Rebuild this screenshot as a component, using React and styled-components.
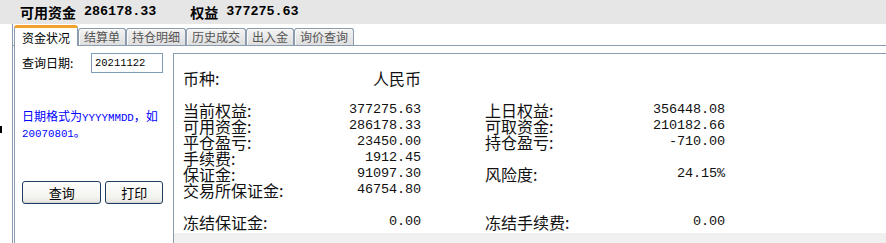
import React from "react";
import styled, { createGlobalStyle } from "styled-components";

const CJK = `"Noto Sans CJK SC", "Noto Sans", sans-serif`;
const MONO = `"Liberation Mono", "Noto Sans CJK SC", monospace`;
const LINE = "#8a9cad";

const Global = createGlobalStyle`
  html, body { margin: 0; padding: 0; background: #fff; }
  body { font-family: ${CJK}; color: #000; }
  * { box-sizing: border-box; }
`;

const Page = styled.div`
  width: 886px;
  height: 243px;
  overflow: hidden;
  display: flex;
  flex-direction: column;
  background: #fff;
`;

const TopBar = styled.div`
  height: 24px;
  flex: none;
  background: #e6e6e6;
  display: flex;
  align-items: center;
  padding-left: 20px;
`;

const Stat = styled.div`
  display: flex;
  align-items: center;
  gap: 8px;
  margin-right: 34px;
`;

const StatLabel = styled.span`
  font-family: ${CJK};
  font-size: 14px;
  font-weight: 700;
  line-height: 16px;
`;

const StatValue = styled.span`
  font-family: ${MONO};
  font-size: 13.4px;
  font-weight: 700;
  line-height: 16px;
`;

const Body = styled.div`
  flex: 1;
  display: flex;
  min-height: 0;
`;

const Gutter = styled.div`
  width: 12px;
  flex: none;
  padding-top: 102px;
`;

const CursorMark = styled.div`
  width: 2px;
  height: 7px;
  background: #000;
`;

const Main = styled.div`
  flex: 1;
  display: flex;
  flex-direction: column;
  border-left: 1px solid ${LINE};
  min-width: 0;
`;

const TabStrip = styled.div`
  height: 22px;
  flex: none;
  display: flex;
  align-items: flex-end;
  padding-left: 1px;
  border-bottom: 1px solid ${LINE};
`;

const Tab = styled.div`
  position: relative;
  font-family: ${CJK};
  font-size: 12px;
  line-height: 14px;
  white-space: nowrap;
  display: flex;
  align-items: center;
  border: 1px solid ${LINE};
  border-bottom: none;
  border-radius: 3px 3px 0 0;
  ${(p) =>
    p.$active
      ? `
    height: 21px;
    margin-bottom: -1px;
    padding: 1px 7px 0 7px;
    background: #fff;
    color: #000;
    border-top: 3px solid #f2a22a;
    z-index: 1;
  `
      : `
    height: 17px;
    padding: 0 5px;
    background: linear-gradient(#f3f3f3, #dedede);
    color: #555;
    box-shadow: inset 1px 1px 0 #fafafa;
  `}
`;

const Content = styled.div`
  flex: 1;
  display: flex;
  margin-left: 1px;
  border-left: 1px solid ${LINE};
  min-height: 0;
`;

const LeftPanel = styled.div`
  width: 158px;
  flex: none;
  padding: 7px 10px 0 7px;
`;

const DateRow = styled.div`
  display: flex;
  align-items: center;
  justify-content: space-between;
  height: 20px;
`;

const FieldLabel = styled.span`
  font-family: ${CJK};
  font-size: 12px;
  line-height: 14px;
`;

const DateInput = styled.input`
  width: 72px;
  height: 20px;
  border: 1px solid #7f9db9;
  padding: 0 0 0 3px;
  font-family: ${MONO};
  font-size: 10.5px;
  color: #000;
  outline: none;
  background: #fff;
`;

const Hint = styled.div`
  margin-top: 36px;
  color: #0000ff;
  font-family: ${CJK};
  font-size: 12px;
  line-height: 13px;
`;

const HintMono = styled.span`
  font-family: ${MONO};
  font-size: 10.8px;
`;

const ButtonRow = styled.div`
  margin-top: 40px;
  display: flex;
  gap: 4px;
`;

const Button = styled.button`
  width: ${(p) => p.$w}px;
  height: 23px;
  padding: 0;
  border: 1px solid #1e3d63;
  border-radius: 3px;
  background: linear-gradient(#fefefe, #f4f4f0 70%, #e4e3dd);
  font-family: ${CJK};
  font-size: 13px;
  color: #000;
  box-shadow: inset 0 -1px 0 #d6d5cf;
`;

const RightPanel = styled.div`
  flex: 1;
  margin-top: 7px;
  border-top: 1px solid ${LINE};
  border-left: 1px solid ${LINE};
  display: flex;
  flex-direction: column;
  min-width: 0;
`;

const Sheet = styled.div`
  flex: 1;
  padding: 16px 0 0 9px;
`;

const Row = styled.div`
  height: 16px;
  display: flex;
  line-height: 16px;
`;

const Pair = styled.div`
  width: ${(p) => p.$w}px;
  margin-left: ${(p) => p.$offset || 0}px;
  display: flex;
  justify-content: space-between;
`;

const Label = styled.span`
  font-family: ${CJK};
  font-size: 16px;
  color: #111;
`;

const Value = styled.span`
  font-family: ${(p) => (p.$cjk ? CJK : MONO)};
  font-size: ${(p) => (p.$cjk ? 16 : 13.5)}px;
  letter-spacing: ${(p) => (p.$cjk ? 0 : -0.1)}px;
  color: #111;
`;

const Scroll = styled.div`
  height: 10px;
  flex: none;
  background: #f0f0f0;
  padding: 3px 0 0 6px;
`;

const rows = [
  [["币种:", "人民币", true], null],
  null,
  [["当前权益:", "377275.63"], ["上日权益:", "356448.08"]],
  [["可用资金:", "286178.33"], ["可取资金:", "210182.66"]],
  [["平仓盈亏:", "23450.00"], ["持仓盈亏:", "-710.00"]],
  [["手续费:", "1912.45"], null],
  [["保证金:", "91097.30"], ["风险度:", "24.15%"]],
  [["交易所保证金:", "46754.80"], null],
  null,
  [["冻结保证金:", "0.00"], ["冻结手续费:", "0.00"]],
];

const tabs = ["资金状况", "结算单", "持仓明细", "历史成交", "出入金", "询价查询"];

export default function App() {
  return (
    <>
      <Global />
      <Page>
        <TopBar>
          <Stat>
            <StatLabel>可用资金</StatLabel>
            <StatValue>286178.33</StatValue>
          </Stat>
          <Stat>
            <StatLabel>权益</StatLabel>
            <StatValue>377275.63</StatValue>
          </Stat>
        </TopBar>
        <Body>
          <Gutter>
            <CursorMark />
          </Gutter>
          <Main>
            <TabStrip>
              {tabs.map((t, i) => (
                <Tab key={t} $active={i === 0}>
                  {t}
                </Tab>
              ))}
            </TabStrip>
            <Content>
              <LeftPanel>
                <DateRow>
                  <FieldLabel>查询日期:</FieldLabel>
                  <DateInput readOnly value="20211122" />
                </DateRow>
                <Hint>
                  日期格式为<HintMono>YYYYMMDD</HintMono>，如
                  <br />
                  <HintMono>20070801</HintMono>。
                </Hint>
                <ButtonRow>
                  <Button $w={80}>查询</Button>
                  <Button $w={58}>打印</Button>
                </ButtonRow>
              </LeftPanel>
              <RightPanel>
                <Sheet>
                  {rows.map((r, i) => (
                    <Row key={i}>
                      {r && r[0] && (
                        <Pair $w={238}>
                          <Label>{r[0][0]}</Label>
                          <Value $cjk={r[0][2]}>{r[0][1]}</Value>
                        </Pair>
                      )}
                      {r && r[1] && (
                        <Pair $w={240} $offset={64}>
                          <Label>{r[1][0]}</Label>
                          <Value>{r[1][1]}</Value>
                        </Pair>
                      )}
                    </Row>
                  ))}
                </Sheet>
                <Scroll>
                  <svg width="5" height="7" viewBox="0 0 5 7">
                    <path d="M4 0.5 L1 3.5 L4 6.5" fill="none" stroke="#b4b4b4" strokeWidth="1" />
                  </svg>
                </Scroll>
              </RightPanel>
            </Content>
          </Main>
        </Body>
      </Page>
    </>
  );
}
